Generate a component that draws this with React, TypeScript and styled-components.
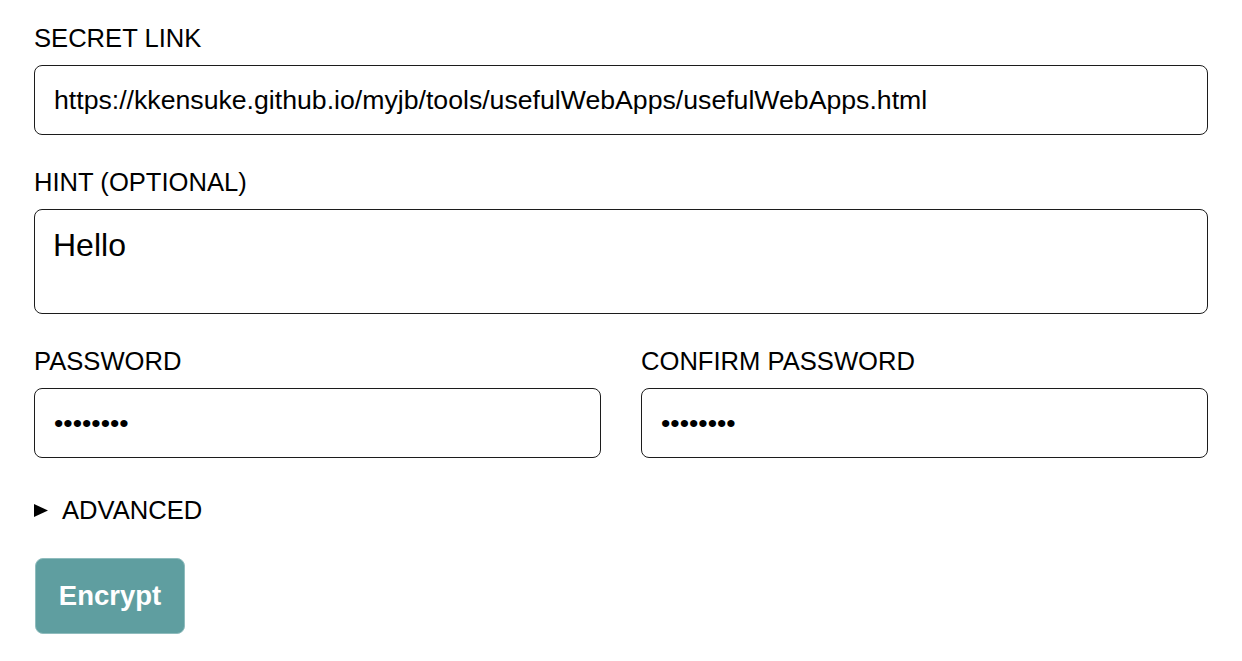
import React, { useState } from 'react';
import styled, { createGlobalStyle } from 'styled-components';

const GlobalStyle = createGlobalStyle`
  html, body {
    margin: 0;
    padding: 0;
    background: #ffffff;
  }
  body {
    font-family: 'Liberation Sans', Arial, Helvetica, sans-serif;
    color: #000;
  }
  * {
    box-sizing: border-box;
  }
`;

const Form = styled.form`
  display: flex;
  flex-direction: column;
  gap: 32px;
  padding: 23px 34px 0 34px;
`;

const Field = styled.div`
  display: flex;
  flex-direction: column;
  min-width: 0;
`;

const Label = styled.label`
  display: block;
  font-size: 25.6px;
  line-height: 30px;
  margin-bottom: 12px;
  color: #000;
`;

const TextInput = styled.input`
  display: block;
  width: 100%;
  height: 70px;
  padding: 0 19px;
  border: 1px solid #1c1c1c;
  border-radius: 8px;
  font-family: 'Liberation Sans', Arial, sans-serif;
  font-size: 26.67px;
  color: #000;
  background: #fff;
  outline: none;
`;

const TextArea = styled.textarea`
  display: block;
  width: 100%;
  height: 105px;
  padding: 17px 18px;
  border: 1px solid #1c1c1c;
  border-radius: 8px;
  font-family: 'Liberation Sans', Arial, sans-serif;
  font-size: 32px;
  color: #000;
  background: #fff;
  resize: none;
  outline: none;
`;

const PasswordRow = styled.div`
  display: grid;
  grid-template-columns: 1fr 1fr;
  column-gap: 40px;
`;

const Advanced = styled.details`
  margin-top: 5px;
`;

const Summary = styled.summary`
  display: flex;
  align-items: center;
  gap: 14px;
  list-style: none;
  font-size: 25.6px;
  line-height: 30px;
  cursor: pointer;

  &::-webkit-details-marker {
    display: none;
  }
`;

const Marker = styled.svg`
  width: 14px;
  height: 13px;
  flex: none;
`;

const Actions = styled.div`
  display: flex;
  margin-top: 1px;
`;

const EncryptButton = styled.button`
  width: 150px;
  height: 76px;
  margin-left: 1px;
  border: 1px solid #8fbcbd;
  border-radius: 8px;
  background: #5f9ea0;
  color: #fff;
  font-family: 'Liberation Sans', Arial, sans-serif;
  font-weight: 700;
  font-size: 27.5px;
  cursor: pointer;
`;

export default function App() {
  const [link, setLink] = useState(
    'https://kkensuke.github.io/myjb/tools/usefulWebApps/usefulWebApps.html'
  );
  const [hint, setHint] = useState('Hello');
  const [password, setPassword] = useState('12345678');
  const [confirm, setConfirm] = useState('12345678');

  return (
    <>
      <GlobalStyle />
      <Form onSubmit={(e) => e.preventDefault()}>
        <Field>
          <Label htmlFor="link">SECRET LINK</Label>
          <TextInput id="link" type="text" value={link} onChange={(e) => setLink(e.target.value)} />
        </Field>
        <Field>
          <Label htmlFor="hint">HINT (OPTIONAL)</Label>
          <TextArea id="hint" value={hint} onChange={(e) => setHint(e.target.value)} />
        </Field>
        <PasswordRow>
          <Field>
            <Label htmlFor="password">PASSWORD</Label>
            <TextInput
              id="password"
              type="password"
              value={password}
              onChange={(e) => setPassword(e.target.value)}
            />
          </Field>
          <Field>
            <Label htmlFor="confirm">CONFIRM PASSWORD</Label>
            <TextInput
              id="confirm"
              type="password"
              value={confirm}
              onChange={(e) => setConfirm(e.target.value)}
            />
          </Field>
        </PasswordRow>
        <Advanced>
          <Summary>
            <Marker viewBox="0 0 14 13">
              <polygon points="0,0 14,6.5 0,13" fill="#000" />
            </Marker>
            ADVANCED
          </Summary>
        </Advanced>
        <Actions>
          <EncryptButton type="submit">Encrypt</EncryptButton>
        </Actions>
      </Form>
    </>
  );
}
